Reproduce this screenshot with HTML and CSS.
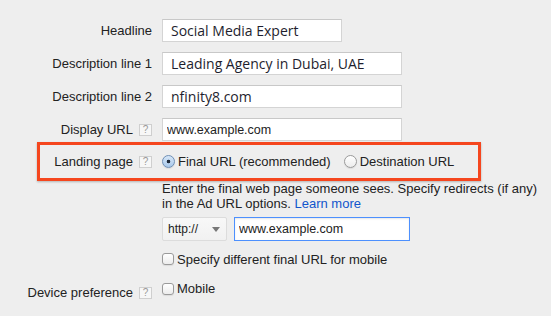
FILE: index.html
```html
<!DOCTYPE html>
<html>
<head>
<meta charset="utf-8">
<title>Ad text</title>
<link rel="stylesheet" href="styles.css">
</head>
<body>
<form id="ad" class="ad-form">
  <div class="field">
    <label class="key">Headline</label>
    <input class="text short" type="text" value="Social Media Expert">
  </div>
  <div class="field">
    <label class="key">Description line 1</label>
    <input class="text" type="text" value="Leading Agency in Dubai, UAE">
  </div>
  <div class="field">
    <label class="key">Description line 2</label>
    <input class="text" type="text" value="nfinity8.com">
  </div>
  <div class="field">
    <label class="key">Display URL <span class="help">?</span></label>
    <input class="text url" type="text" value="www.example.com">
  </div>
  <div class="field highlight">
    <label class="key">Landing page <span class="help">?</span></label>
    <label class="choice"><input type="radio" name="landing" checked> Final URL (recommended)</label>
    <label class="choice"><input type="radio" name="landing"> Destination URL</label>
  </div>
  <p class="hint">Enter the final web page someone sees. Specify redirects (if any) in the Ad URL options. <a href="#">Learn more</a></p>
  <div class="url-row">
    <span class="dropdown">http://
      <svg width="8" height="5" viewBox="0 0 8 5"><path d="M0 0h8L4 5z" fill="#777"/></svg>
    </span>
    <input class="text final" type="text" value="www.example.com">
  </div>
  <div class="check-row">
    <label class="choice"><input type="checkbox"> Specify different final URL for mobile</label>
  </div>
  <div class="field device">
    <label class="key">Device preference <span class="help">?</span></label>
    <label class="choice"><input type="checkbox"> Mobile</label>
  </div>
</form>
</body>
</html>
```
FILE: styles.css
```css
html, body { margin: 0; background: #eeeeee; }
body { font: 13px/15px "Liberation Sans", Arial, Helvetica, sans-serif; color: #222; }

.ad-form { padding-top: 19px; }
.field { display: flex; align-items: center; height: 23px; margin-bottom: 10px; }
.field .key { width: 152px; margin-right: 10px; display: flex; justify-content: flex-end; align-items: center; gap: 6px; white-space: nowrap; }

.help { display: inline-block; width: 11px; height: 10px; border: 1px solid #cfcfcf; background: #f7f7f7; color: #999; font-size: 10px; line-height: 10px; text-align: center; }

.text { box-sizing: border-box; height: 23px; margin: 0; padding: 0 8px; border: 1px solid #d4d4d4; border-top-color: #c8c8c8; background: #fff; color: #1e1e2e; font: 14px "Open Sans", "Noto Sans", sans-serif; outline: none; }
.text { width: 240px; }
.text.short { width: 180px; }
.text.url { padding-left: 4px; font: 12.5px "Liberation Sans", Arial, sans-serif; color: #222; }

.highlight { box-sizing: border-box; height: 39px; width: 444px; margin: -9px 0 0 37px; border: 3px solid #f5461e; box-shadow: 0 1px 2px rgba(0, 0, 0, .25); }
.highlight .key { width: 112px; }
.highlight .choice { margin-right: 13px; }

.choice { display: inline-flex; align-items: center; gap: 3px; white-space: nowrap; }
.choice input { appearance: none; -webkit-appearance: none; margin: 0; width: 13px; height: 13px; box-sizing: border-box; border: 1px solid #9a9a9a; background: linear-gradient(#ffffff, #ececec); box-shadow: 0 1px 1px rgba(0, 0, 0, .08); }
.choice input[type=radio] { border-radius: 50%; }
.choice input[type=radio]:checked { border-color: #6f8fb5; background: radial-gradient(circle, #1f2a3a 0 1.6px, transparent 2.1px), linear-gradient(#d7e7f8, #a9c8ea); }
.choice input[type=checkbox] { width: 12px; height: 12px; border-radius: 3px; }

.hint { width: 385px; margin: 0 0 0 162px; line-height: 15px; }
.hint a { color: #1155cc; text-decoration: none; }

.url-row { display: flex; gap: 7px; height: 24px; margin: 6px 0 0 162px; }
.dropdown { box-sizing: border-box; width: 65px; height: 24px; display: flex; align-items: center; justify-content: space-between; padding: 0 6px 0 5px; border: 1px solid #dcdcdc; border-radius: 2px; background: linear-gradient(#f8f8f8, #f1f1f1); font-size: 12px; }
.text.final { width: 176px; height: 24px; padding-left: 4px; border: 1px solid #4d90fe; box-shadow: inset 0 1px 2px rgba(0, 0, 0, .1); font: 12.5px "Liberation Sans", Arial, sans-serif; color: #222; }

.check-row { display: flex; align-items: center; height: 16px; margin: 10px 0 0 162px; }

.field.device { margin-top: 14px; height: 16px; align-items: flex-start; }
.field.device .key { padding-top: 4px; }
```
